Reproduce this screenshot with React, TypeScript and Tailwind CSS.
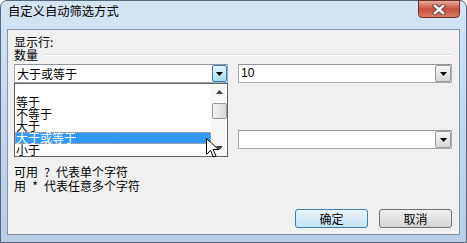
import React from "react";

const items = ["", "等于", "不等于", "大于", "大于或等于", "小于"];

function DownArrow() {
  return (
    <svg width="7" height="4" viewBox="0 0 7 4">
      <path d="M0 0h7L3.5 4z" fill="#000" />
    </svg>
  );
}

function Combo({ value, hot }: { value?: string; hot?: boolean }) {
  return (
    <div className="flex h-[19px] w-[214px] border border-[#a4abb4] border-t-[#8e959e] bg-white">
      <div className="flex-1 pl-[2px] text-[12px] leading-[17px] text-black">{value}</div>
      {hot ? (
        <div className="flex w-[15px] items-center justify-center rounded-[2px] border border-[#3c7fb1] bg-linear-to-b from-[#e5f4fc] to-[#a9dbf6]">
          <DownArrow />
        </div>
      ) : (
        <div className="flex w-[16px] items-center justify-center rounded-[2px] border border-[#9a9a9a] bg-linear-to-b from-[#f7f7f7] to-[#d6d6d6]">
          <DownArrow />
        </div>
      )}
    </div>
  );
}

function DropList() {
  return (
    <div className="absolute left-[6px] top-[53px] flex h-[74px] w-[214px] border border-[#646464] bg-white">
      <div className="w-[196px]">
        {items.map((t, i) =>
          i === 4 ? (
            <div key={i} className="h-[12px] border border-dotted border-[#f0a860] bg-[#3399ff] text-[12px] leading-[10px] text-white">
              {t}
            </div>
          ) : (
            <div key={i} className="h-[12px] pl-[1px] text-[12px] leading-[12px] text-black">
              {t}
            </div>
          )
        )}
      </div>
      <div className="flex w-[16px] flex-col items-center bg-[#f7f7f7]">
        <div className="flex h-[16px] w-full items-center justify-center">
          <svg width="7" height="4" viewBox="0 0 7 4">
            <path d="M0 4h7L3.5 0z" fill="#404040" />
          </svg>
        </div>
        <div className="mt-[3px] h-[16px] w-[15px] rounded-[2px] border border-[#9b9b9b] bg-linear-to-r from-[#f4f4f4] to-[#d9d9d9]" />
        <div className="mt-auto flex h-[16px] w-full items-center justify-center">
          <svg width="7" height="4" viewBox="0 0 7 4">
            <path d="M0 0h7L3.5 4z" fill="#404040" />
          </svg>
        </div>
      </div>
    </div>
  );
}

function Sym({ c }: { c: string }) {
  return <span className="inline-block w-[18px] text-center">{c}</span>;
}

export default function App() {
  return (
    <div className="relative h-[243px] w-[467px] overflow-hidden bg-white font-['Noto_Sans_CJK_SC',sans-serif]">
      <div className="flex h-full w-full flex-col rounded-t-[7px] border border-[#55687e] bg-linear-to-b from-[#d4e4f4] via-[#c3d7ed] to-[#b8cfe8]">
        <div className="flex h-[28px] items-start">
          <div className="pl-[7px] pt-[3px] text-[12.3px] leading-[14px] text-black">自定义自动筛选方式</div>
          <div className="-mt-px ml-auto mr-[6px] flex h-[18px] w-[42px] items-center justify-center rounded-b-[4px] border border-[#6e2e24] bg-linear-to-b from-[#e6ab9f] via-[#c8503d] to-[#d67a66]">
            <svg width="14" height="11" viewBox="0 0 14 11">
              <path d="M3 2l8 7M11 2l-8 7" stroke="#6a3a32" strokeWidth="4.4" strokeLinecap="square" />
              <path d="M3 2l8 7M11 2l-8 7" stroke="#fff" strokeWidth="2.6" strokeLinecap="square" />
            </svg>
          </div>
        </div>
        <div className="relative mx-[6px] mb-[7px] flex flex-1 flex-col border border-[#8495ab] bg-[#f0f0f0] pl-[6px] pr-[7px] text-[12px] text-black">
          <div className="mt-[5px] leading-[13px]">显示行:</div>
          <div className="flex items-center leading-[13px]">
            <span>数量</span>
            <div className="ml-[6px] flex-1 border-t border-b border-t-[#d5dfe5] border-b-white" />
          </div>
          <div className="mt-[3px] flex gap-[10px]">
            <Combo value="大于或等于" hot />
            <div className="font-['Liberation_Sans',sans-serif]">
              <Combo value="10" />
            </div>
          </div>
          <div className="mt-[47px] flex gap-[10px]">
            <Combo />
            <Combo />
          </div>
          <div className="mt-[16px] leading-[14px]">
            可用<Sym c="?" />代表单个字符
          </div>
          <div className="leading-[14px]">
            用<Sym c="*" />代表任意多个字符
          </div>
          <div className="mt-[16px] flex justify-end gap-[11px]">
            <button className="h-[19px] w-[73px] rounded-[3px] border border-[#3c7fb1] bg-linear-to-b from-[#eaf6fd] to-[#c2e2f4] text-[12px] leading-[17px]">
              确定
            </button>
            <button className="h-[19px] w-[73px] rounded-[3px] border border-[#707070] bg-linear-to-b from-[#f2f2f2] to-[#d4d4d4] text-[12px] leading-[17px]">
              取消
            </button>
          </div>
          <DropList />
        </div>
      </div>
      <svg className="absolute left-[206px] top-[138px]" width="13" height="20" viewBox="0 0 13 20">
        <path d="M0.5 0.5v16l4-4 3 6.5 2.5-1-3-6.5h5.5z" fill="#fff" stroke="#000" strokeWidth="1" />
      </svg>
    </div>
  );
}
